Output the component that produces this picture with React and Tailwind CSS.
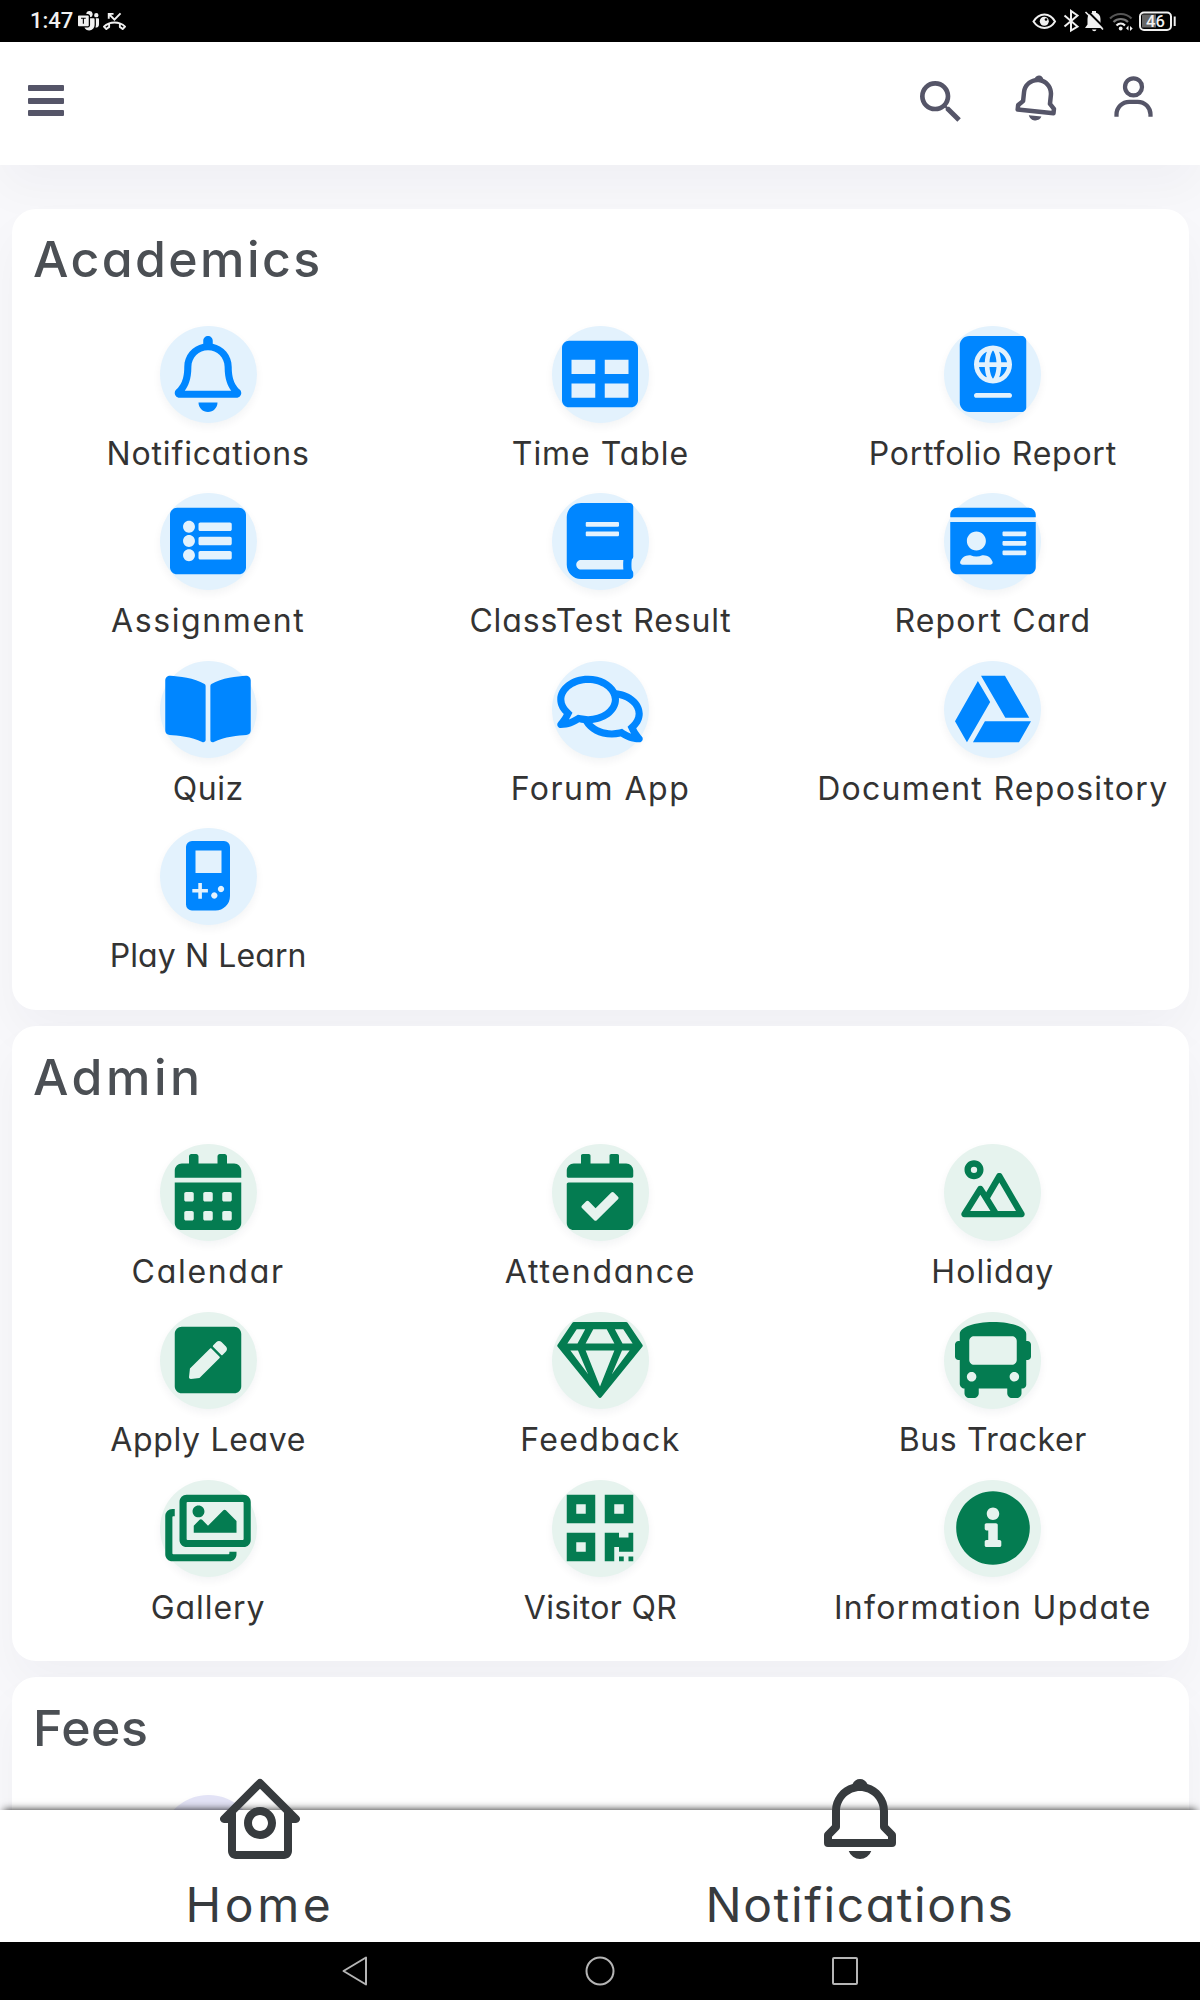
import React from 'react';
import {
    FaRegBell, FaTable, FaPassport, FaListAlt, FaBook, FaIdCard, FaBookOpen, FaRegComments, FaGoogleDrive,
    FaCalendarAlt, FaCalendarCheck, FaPenSquare, FaRegGem, FaBus, FaRegImages, FaQrcode, FaInfoCircle,
} from 'react-icons/fa';
import {BiLandscape, BiBell, BiHomeCircle, BiUser} from 'react-icons/bi';
import {BsMicrosoftTeams} from 'react-icons/bs';
import {MdSearch, MdOutlinePhoneMissed} from 'react-icons/md';

// handheld game console
const GameIcon = ({className}) => (
    <svg viewBox="0 0 44 76" className={className} fill="currentColor">
        <path
            fillRule="evenodd"
            d="M6 3h32a6 6 0 0 1 6 6v49a14.500 14.500 0 0 1-14.500 14.500H6a6 6 0 0 1-6-6V9a6 6 0 0 1 6-6zm3.500 9.500v22.500h26V12.500zM12.300 45v6H6.300v3.600h6v6.200h3.600v-6.200h6V51h-6v-6zM35 47.800a3.200 3.200 0 1 0 .01 0zM28.300 54.300a3.200 3.200 0 1 0 .01 0z"
        />
    </svg>
);

const academics = [
    {label: 'Notifications', icon: FaRegBell, tracking: 'tracking-[0.85px]'},
    {label: 'Time Table', icon: FaTable, tracking: 'tracking-[0.95px]'},
    {label: 'Portfolio Report', icon: FaPassport, tracking: 'tracking-[0.75px]'},
    {label: 'Assignment', icon: FaListAlt, tracking: 'tracking-[1.6px]'},
    {label: 'ClassTest Result', icon: FaBook, tracking: 'tracking-[0.85px]'},
    {label: 'Report Card', icon: FaIdCard, tracking: 'tracking-[1.2px]'},
    {label: 'Quiz', icon: FaBookOpen, tracking: 'tracking-[0.5px]'},
    {label: 'Forum App', icon: FaRegComments, tracking: 'tracking-[1.5px]'},
    {label: 'Document Repository', icon: FaGoogleDrive, tracking: 'tracking-[1.3px]'},
    {label: 'Play N Learn', icon: GameIcon, tracking: 'tracking-[0.1px]'},
];

const admin = [
    {label: 'Calendar', icon: FaCalendarAlt, tracking: 'tracking-[1.7px]'},
    {label: 'Attendance', icon: FaCalendarCheck, tracking: 'tracking-[1.75px]'},
    {label: 'Holiday', icon: BiLandscape, tracking: 'tracking-[1.05px]'},
    {label: 'Apply Leave', icon: FaPenSquare, tracking: 'tracking-[0.65px]'},
    {label: 'Feedback', icon: FaRegGem, tracking: 'tracking-[1.35px]'},
    {label: 'Bus Tracker', icon: FaBus, tracking: 'tracking-[0.6px]'},
    {label: 'Gallery', icon: FaRegImages, tracking: 'tracking-[0.95px]'},
    {label: 'Visitor QR', icon: FaQrcode, tracking: 'tracking-[0.35px]'},
    {label: 'Information Update', icon: FaInfoCircle, tracking: 'tracking-[1.3px]'},
];

const Card = ({title, titleClass, children}) => (
    <section className="shrink-0 rounded-[24px] bg-white pb-[14px] shadow-[0_24px_48px_rgba(18,38,63,0.035)]">
        <h2 className={`pl-[21px] text-[50px] leading-[60px] font-medium text-[#4b4f54] ${titleClass}`}>
            {title}
        </h2>
        <div className="grid grid-cols-3">{children}</div>
    </section>
);

const circle = 'flex h-[97px] w-[97px] shrink-0 items-center justify-center rounded-full shadow-[0_4px_8px_rgba(18,38,63,0.05)]';

const Tile = ({item, tone}) => {
    const Icon = item.icon;
    return (
        <div className="flex h-[167.6px] flex-col items-center">
            <div className={`${circle} ${tone}`}>
                <Icon className="mb-[1px] h-[76px] w-[86px] shrink-0"/>
            </div>
            <span className={`mt-[11px] text-[32px] leading-[40px] whitespace-nowrap text-[#333] ${item.tracking}`}>
                {item.label}
            </span>
        </div>
    );
};

const StatusBar = () => (
    <div className="flex h-[42px] shrink-0 items-center justify-between bg-black pl-[30px] pr-[24px] text-[#f0f0f0]">
        <div className="flex items-center">
            <span className="w-[48px] text-[22px] leading-[26px] font-medium font-['Roboto',sans-serif]">1:47</span>
            <BsMicrosoftTeams className="h-[21px] w-[21px]"/>
            <MdOutlinePhoneMissed className="ml-[4px] h-[23px] w-[23px]"/>
        </div>
        <svg width="144" height="42" viewBox="0 0 144 42" fill="none" stroke="currentColor">
            <path d="M1.500 21.500C7 12 18 12 23 21.500C18 30 7 30 1.500 21.500z" strokeWidth="2"/>
            <circle cx="12.300" cy="21.300" r="4.500" fill="currentColor" stroke="none"/>
            <circle cx="14" cy="19.500" r="1.300" fill="#000" stroke="none"/>
            <path d="M32.500 15.500l13 11-6.500 4V11l6.500 4.500-13 11" strokeWidth="2"/>
            <path d="M53 28h18l-2.500-3.500V19c0-3.500-2-5.500-4.500-6.200V11h-4v1.800c-2.500.7-4.500 2.700-4.500 6.200v5.500z" fill="currentColor" stroke="none"/>
            <path d="M60 29.500h4.500a2.300 2.300 0 0 1-4.500 0z" fill="currentColor" stroke="none"/>
            <path d="M55 10.500l18 18" stroke="#000" strokeWidth="2"/>
            <path d="M53.500 12l17.500 17.500" strokeWidth="1.600"/>
            <path d="M78 18.500c6-6 15.500-6 21.500 0" stroke="#555" strokeWidth="2.200"/>
            <path d="M81.500 22c4-4 10.500-4 14.500 0" stroke="#777" strokeWidth="2.200"/>
            <path d="M84.500 25.500c2.500-2.500 6-2.500 8.500 0" strokeWidth="2.200"/>
            <circle cx="88.700" cy="28.500" r="1.900" fill="currentColor" stroke="none"/>
            <path d="M96.500 25.500v5l-2.500-2.300zM98 31v-5l2.700 2.500z" fill="currentColor" stroke="none"/>
            <rect x="110" y="14.500" width="14" height="13" fill="#666" stroke="none"/>
            <rect x="108" y="12.500" width="31" height="17.500" rx="4" strokeWidth="2"/>
            <path d="M142.700 16.500v9.500" strokeWidth="2"/>
            <text x="123.500" y="27" textAnchor="middle" fontSize="16.500" fontWeight="500" fill="currentColor" stroke="none" className="font-['Roboto',sans-serif]">46</text>
        </svg>
    </div>
);

const Header = () => (
    <header className="flex h-[123px] shrink-0 items-start justify-between bg-white pl-[28px] pr-[41px] pt-[30px] text-[#555568] shadow-[0_24px_48px_rgba(18,38,63,0.035)]">
        <div className="mt-[13px] flex flex-col gap-[6.5px]">
            <span className="h-[6px] w-[36px] rounded-[1px] bg-current"/>
            <span className="h-[6px] w-[36px] rounded-[1px] bg-current"/>
            <span className="h-[6px] w-[36px] rounded-[1px] bg-current"/>
        </div>
        <div className="flex">
            <MdSearch className="mt-[2px] h-[56px] w-[56px]"/>
            <BiBell className="-mt-px ml-[41px] h-[54px] w-[54px] rotate-[6deg]"/>
            <BiUser className="ml-[44px] h-[51px] w-[51px]"/>
        </div>
    </header>
);

// icons rise above the top edge of the bar
const BottomTab = ({icon: Icon, label, tracking}) => (
    <div className="flex flex-col items-center pr-[80px]">
        <Icon className="-mt-[39px] h-[96px] w-[96px] shrink-0"/>
        <span className={`mt-[8px] text-[48px] leading-[60px] ${tracking}`}>{label}</span>
    </div>
);

const SystemNav = () => (
    <div className="flex h-[58px] shrink-0 items-center justify-center gap-[215px] bg-black text-[#b5b5b5]">
        <svg width="30" height="30" viewBox="0 0 30 30" fill="none" stroke="currentColor" strokeWidth="2" strokeLinejoin="round">
            <path d="M26 1.500v27L3.500 15z"/>
        </svg>
        <svg width="30" height="30" viewBox="0 0 30 30" fill="none" stroke="currentColor" strokeWidth="2">
            <circle cx="15" cy="15" r="13.500"/>
        </svg>
        <svg width="30" height="30" viewBox="0 0 30 30" fill="none" stroke="currentColor" strokeWidth="2">
            <rect x="3" y="2" width="24" height="26" rx="1"/>
        </svg>
    </div>
);

function App() {
    return (
        <div className="flex h-[2000px] w-[1200px] flex-col overflow-hidden bg-[#f8f8fb] font-['Inter',sans-serif] [font-feature-settings:'cv11']">
            <StatusBar/>
            <Header/>
            <main className="flex min-h-0 flex-1 flex-col gap-[16px] overflow-hidden pl-[12px] pr-[11px] pt-[43.5px]">
                <Card title="Academics" titleClass="h-[117px] pt-[20px] tracking-[2.4px]">
                    {academics.map((item) => <Tile key={item.label} item={item} tone="bg-[#e3f2fd] text-[#0086ff]"/>)}
                </Card>
                <Card title="Admin" titleClass="h-[118.5px] pt-[21px] tracking-[3.5px]">
                    {admin.map((item) => <Tile key={item.label} item={item} tone="bg-[#e6f3ee] text-[#047c51]"/>)}
                </Card>
                <Card title="Fees" titleClass="h-[118px] pt-[21px] tracking-[0.5px]">
                    <div className="flex justify-center">
                        <div className={`${circle} bg-[#e3e3f6]`}/>
                    </div>
                </Card>
            </main>
            <footer className="relative grid h-[132px] shrink-0 grid-cols-2 bg-white text-[#373b3e] shadow-[0_-4px_8px_-4px_rgba(0,0,0,0.9)]">
                <BottomTab icon={BiHomeCircle} label="Home" tracking="tracking-[3.6px]"/>
                <BottomTab icon={BiBell} label="Notifications" tracking="tracking-[1.6px]"/>
            </footer>
            <SystemNav/>
        </div>
    );
}

export default App;
